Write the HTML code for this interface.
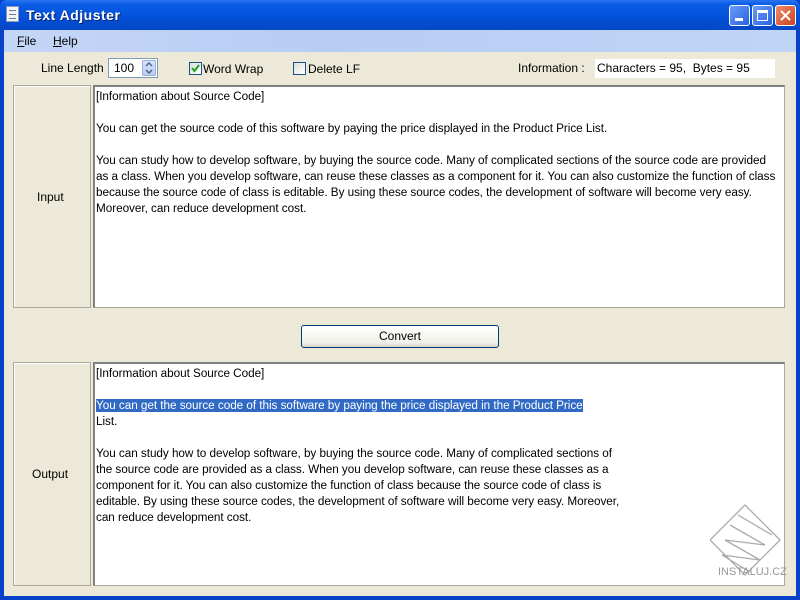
<!DOCTYPE html>
<html><head><meta charset="utf-8"><style>
*{margin:0;padding:0;box-sizing:border-box}
body{width:800px;height:600px;overflow:hidden;background:#0842c8;font-family:"Liberation Sans",sans-serif;font-size:12px;color:#000;position:relative}
.title{position:absolute;left:0;top:0;width:800px;height:30px;background:linear-gradient(#2a74ef 0%,#0a5de6 15%,#0350d8 60%,#0547c4 100%);border-radius:7px 7px 0 0}
.title .t{position:absolute;left:26px;top:7px;color:#fff;font-weight:bold;font-size:14px;letter-spacing:0.5px;text-shadow:1px 1px #0a246a}
.ico{position:absolute;left:6px;top:6px;width:13px;height:16px;background:#f4f4f4;border:1px solid #8a9ab8}
.ico i{display:block;height:1px;background:#6a7a9a;margin:3px 2px 0}
.btn{position:absolute;top:5px;width:21px;height:21px;border:1px solid #fff;border-radius:3px;background:linear-gradient(135deg,#6a9cf8,#2a62e0)}
.close{background:linear-gradient(135deg,#f08a6a,#c84420)}
.client{position:absolute;left:4px;top:30px;width:792px;height:566px;background:#ece9d8}
.menu{position:absolute;left:0;top:0;width:792px;height:22px;background:linear-gradient(90deg,#c4d6f6,#b8cdf4 40%,#c0d4f6)}
.menu span{position:absolute;top:4px}
.lbl{position:absolute}
.box{position:absolute;background:#fff;border:1px solid #7f9db9}
.panel{position:absolute;border:1px solid #aca899;background:#ece9d8;box-shadow:inset 1px 1px #fff}
.ta{position:absolute;background:#fff;border:1px solid #aca899;border-top:2px solid #808080;border-left:2px solid #808080;padding:2px 1px;line-height:16px;white-space:pre;font-size:11.75px;letter-spacing:-0.05px}
.cb{position:absolute;width:13px;height:13px;border:1px solid #1c5180;background:linear-gradient(135deg,#dcdcd7,#fff)}
.sel{background:#316ac5;color:#fff}
</style></head><body>
<div class="title"><div class="ico"><i></i><i></i><i></i></div><div class="t">Text Adjuster</div>
<div class="btn" style="left:729px"><div style="position:absolute;left:5px;top:12px;width:8px;height:3px;background:#fff"></div></div>
<div class="btn" style="left:752px"><div style="position:absolute;left:4px;top:4px;width:11px;height:11px;border:1px solid #fff;border-top-width:3px"></div></div>
<div class="btn close" style="left:775px"><svg width="19" height="19" style="position:absolute;left:0;top:0"><path d="M5 5L14 14M14 5L5 14" stroke="#fff" stroke-width="2"/></svg></div>
</div>
<div class="client">
<div class="menu"><span style="left:13px"><u>F</u>ile</span><span style="left:49px"><u>H</u>elp</span></div>
<div class="lbl" style="left:37px;top:31px">Line Length</div>
<div class="box" style="left:104px;top:28px;width:50px;height:20px;padding:2px 5px">100</div>
<div style="position:absolute;left:138px;top:30px;width:14px;height:16px;background:linear-gradient(#d8e4fa,#b8cdf4);border:1px solid #9ab0dc;border-radius:2px"><svg width="14" height="16" style="position:absolute;left:-1px;top:-1px"><path d="M4 6L7 3L10 6M4 10L7 13L10 10" fill="none" stroke="#4d6185" stroke-width="1.5"/></svg></div>
<div class="cb" style="left:185px;top:32px"><svg width="11" height="11" style="position:absolute;left:0;top:0"><path d="M2 5L4.5 8L9 2" fill="none" stroke="#21a121" stroke-width="2"/></svg></div>
<div class="lbl" style="left:199px;top:32px">Word Wrap</div>
<div class="cb" style="left:289px;top:32px"></div>
<div class="lbl" style="left:304px;top:32px">Delete LF</div>
<div class="lbl" style="left:514px;top:31px">Information :</div>
<div class="box" style="left:590px;top:28px;width:181px;height:20px;padding:2px 2px;border-color:#ece9d8 #fff #fff #ece9d8">Characters = 95,&nbsp; Bytes = 95</div>
<div class="panel" style="left:9px;top:55px;width:78px;height:223px"><div style="position:absolute;left:23px;top:104px">Input</div></div>
<div class="ta" style="left:89px;top:55px;width:692px;height:223px">[Information about Source Code]

You can get the source code of this software by paying the price displayed in the Product Price List.

You can study how to develop software, by buying the source code. Many of complicated sections of the source code are provided
as a class. When you develop software, can reuse these classes as a component for it. You can also customize the function of class
because the source code of class is editable. By using these source codes, the development of software will become very easy.
Moreover, can reduce development cost.</div>
<div style="position:absolute;left:297px;top:295px;width:198px;height:23px;border:1px solid #003c74;border-radius:3px;background:linear-gradient(#fff,#f0f0ea 80%,#d6d0c5);text-align:center;line-height:20px">Convert</div>
<div class="panel" style="left:9px;top:332px;width:78px;height:224px"><div style="position:absolute;left:18px;top:104px">Output</div></div>
<div class="ta" style="left:89px;top:332px;width:692px;height:224px">[Information about Source Code]

<span class="sel">You can get the source code of this software by paying the price displayed in the Product Price</span>
List.

You can study how to develop software, by buying the source code. Many of complicated sections of
the source code are provided as a class. When you develop software, can reuse these classes as a
component for it. You can also customize the function of class because the source code of class is
editable. By using these source codes, the development of software will become very easy. Moreover,
can reduce development cost.</div>
<svg width="80" height="90" style="position:absolute;left:706px;top:470px" fill="none" stroke="#aaa" stroke-width="1.3"><path d="M35 5L70 40L35 75L0 40Z"/><path d="M20 25L55 45L15 40L50 60L12 55L40 72"/><path d="M28 15L62 35"/></svg>
<div style="position:absolute;left:714px;top:536px;color:#999;font-size:11px">INSTALUJ.CZ</div>
</div>
</body></html>
